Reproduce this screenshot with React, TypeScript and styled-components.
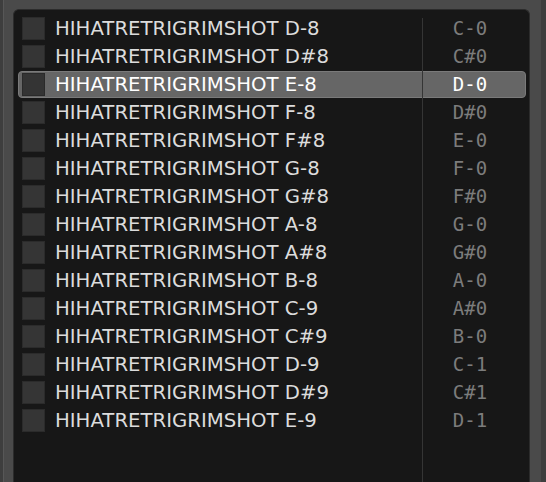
import React from "react";
import styled, { createGlobalStyle } from "styled-components";

const Global = createGlobalStyle`
  html, body { margin: 0; padding: 0; background: #3e3e3e; overflow: hidden; }
  #root { height: 482px; }
`;

const Page = styled.div`
  height: 482px;
  padding: 0 5px 0 3px;
  display: flex;
`;

const Frame = styled.div`
  flex: 1;
  background: #4a4a4a;
  border-left: 1px solid #575757;
  padding: 9px 11px 0 9px;
  display: flex;
`;

const Panel = styled.div`
  position: relative;
  flex: 1;
  background: #171717;
  border: 1px solid #2c2c2c;
  border-bottom: none;
  border-radius: 6px 6px 0 0;
  padding: 5px 3px 0 4px;
  display: flex;
  flex-direction: column;
  gap: 1px;
  overflow: hidden;
`;

const Divider = styled.div`
  position: absolute;
  left: 408px;
  top: 8px;
  bottom: 0;
  width: 1px;
  background: #353535;
`;

const Row = styled.div<{ $selected?: boolean }>`
  height: 27px;
  box-sizing: border-box;
  display: flex;
  align-items: center;
  border-radius: 4px;
  border: 1px solid ${(p) => (p.$selected ? "#7a7a7a" : "transparent")};
  background: ${(p) => (p.$selected ? "#666666" : "transparent")};
  padding-left: 3px;
`;

const Check = styled.div<{ $selected?: boolean }>`
  width: 23px;
  height: 23px;
  box-sizing: border-box;
  background: ${(p) => (p.$selected ? "#343434" : "#353535")};
  border: 1px solid ${(p) => (p.$selected ? "#2a2a2a" : "#2b2b2b")};
  flex: none;
`;

const Name = styled.div<{ $selected?: boolean }>`
  width: 359px;
  flex: none;
  padding-left: 10px;
  font-family: "DejaVu Sans", sans-serif;
  font-size: 19.7px;
  line-height: 27px;
  color: ${(p) => (p.$selected ? "#ffffff" : "#dcdcdc")};
  white-space: nowrap;
  overflow: hidden;
`;

const Note = styled.div<{ $selected?: boolean }>`
  flex: 1;
  text-align: center;
  font-family: "DejaVu Sans Mono", monospace;
  font-size: 19px;
  line-height: 27px;
  padding-left: 1px;
  color: ${(p) => (p.$selected ? "#ffffff" : "#7c7c7c")};
  white-space: nowrap;
`;

const rows: [string, string][] = [
  ["HIHATRETRIGRIMSHOT D-8", "C-0"],
  ["HIHATRETRIGRIMSHOT D#8", "C#0"],
  ["HIHATRETRIGRIMSHOT E-8", "D-0"],
  ["HIHATRETRIGRIMSHOT F-8", "D#0"],
  ["HIHATRETRIGRIMSHOT F#8", "E-0"],
  ["HIHATRETRIGRIMSHOT G-8", "F-0"],
  ["HIHATRETRIGRIMSHOT G#8", "F#0"],
  ["HIHATRETRIGRIMSHOT A-8", "G-0"],
  ["HIHATRETRIGRIMSHOT A#8", "G#0"],
  ["HIHATRETRIGRIMSHOT B-8", "A-0"],
  ["HIHATRETRIGRIMSHOT C-9", "A#0"],
  ["HIHATRETRIGRIMSHOT C#9", "B-0"],
  ["HIHATRETRIGRIMSHOT D-9", "C-1"],
  ["HIHATRETRIGRIMSHOT D#9", "C#1"],
  ["HIHATRETRIGRIMSHOT E-9", "D-1"],
];

export default function App() {
  return (
    <>
      <Global />
      <Page>
        <Frame>
          <Panel>
            {rows.map(([name, note], i) => {
              const sel = i === 2;
              return (
                <Row key={i} $selected={sel}>
                  <Check $selected={sel} />
                  <Name $selected={sel}>{name}</Name>
                  <Note $selected={sel}>{note}</Note>
                </Row>
              );
            })}
            <Divider />
          </Panel>
        </Frame>
      </Page>
    </>
  );
}
